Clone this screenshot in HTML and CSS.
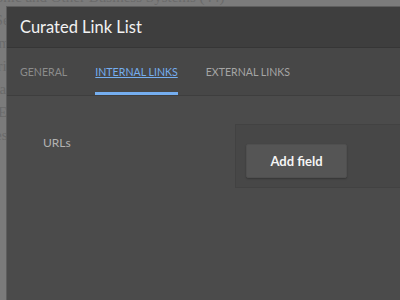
FILE: index.html
```html
<!DOCTYPE html>
<html lang="en">
<head>
  <meta charset="UTF-8">
  <title>Curated Link List</title>
  <link rel="stylesheet" href="styles.css">
</head>
<body>
  <div class="page">
    <p>Electronic and Other Business Systems (44)</p>
    <p>Field Service and Repair</p>
    <p>Consumer Electronics</p>
    <p>Industrial Equipment</p>
    <p>Retail and Service</p>
    <p>Other Electronics</p>
    <p>Business Software</p>
  </div>

  <div class="dialog">
    <div class="dialog-head">Curated Link List</div>
    <div class="tabs">
      <span class="tab">General</span>
      <span class="tab tab-active">Internal Links</span>
      <span class="tab tab-ext">External Links</span>
    </div>
    <div class="dialog-body">
      <div class="field-label">URLs</div>
      <div class="multifield">
        <button class="btn-add">Add field</button>
      </div>
    </div>
  </div>
</body>
</html>
```

FILE: styles.css
```css
body {
  margin: 0;
  background: #7b7b7b;
  font-family: 'Lato', sans-serif;
  overflow: hidden;
}
.page {
  font-family: 'Liberation Serif', serif;
  font-size: 15px;
  color: #6a6a6a;
  margin-top: -11px;
  margin-left: -40px;
}
.page p {
  margin: 0 0 6px;
}
.dialog {
  position: absolute;
  left: 6px;
  top: 6px;
  right: 0;
  bottom: 0;
  background: #4b4b4b;
  border-left: 1px solid #5e5e5e;
  border-top: 1px solid #5e5e5e;
  display: flex;
  flex-direction: column;
}
.dialog-head {
  height: 40px;
  background: #3e3e3e;
  color: #f2f2f2;
  font-size: 16.5px;
  padding-left: 13px;
  display: flex;
  align-items: center;
  border-bottom: 1px solid #363636;
}
.tabs {
  height: 47px;
  background: #474747;
  border-bottom: 1px solid #3e3e3e;
  display: flex;
  padding-left: 13px;
  gap: 28px;
}
.tab {
  font-size: 10.6px;
  text-transform: uppercase;
  color: #8c8c8c;
  display: flex;
  align-items: center;
  border-bottom: 3px solid transparent;
  padding-top: 3px;
}
.tab-active {
  color: #75aef0;
  text-decoration: underline;
  border-bottom-color: #75aef0;
}
.tab-ext {
  color: #a5a5a5;
}
.dialog-body {
  display: flex;
  padding-top: 28px;
}
.field-label {
  width: 192px;
  padding-left: 36px;
  padding-top: 11px;
  font-size: 12px;
  color: #b3b3b3;
}
.multifield {
  flex: 1;
  background: #474747;
  border: 1px solid #424242;
  border-right: none;
  padding: 19px 10px 9px;
  height: 34px;
}
.btn-add {
  width: 101px;
  height: 34px;
  background: #555555;
  border: 1px solid #4f4f4f;
  border-radius: 2px;
  box-shadow: 0 1px 2px rgba(0, 0, 0, 0.25);
  color: #f4f4f4;
  font-family: 'Lato', sans-serif;
  font-weight: 700;
  font-size: 13px;
}
```
